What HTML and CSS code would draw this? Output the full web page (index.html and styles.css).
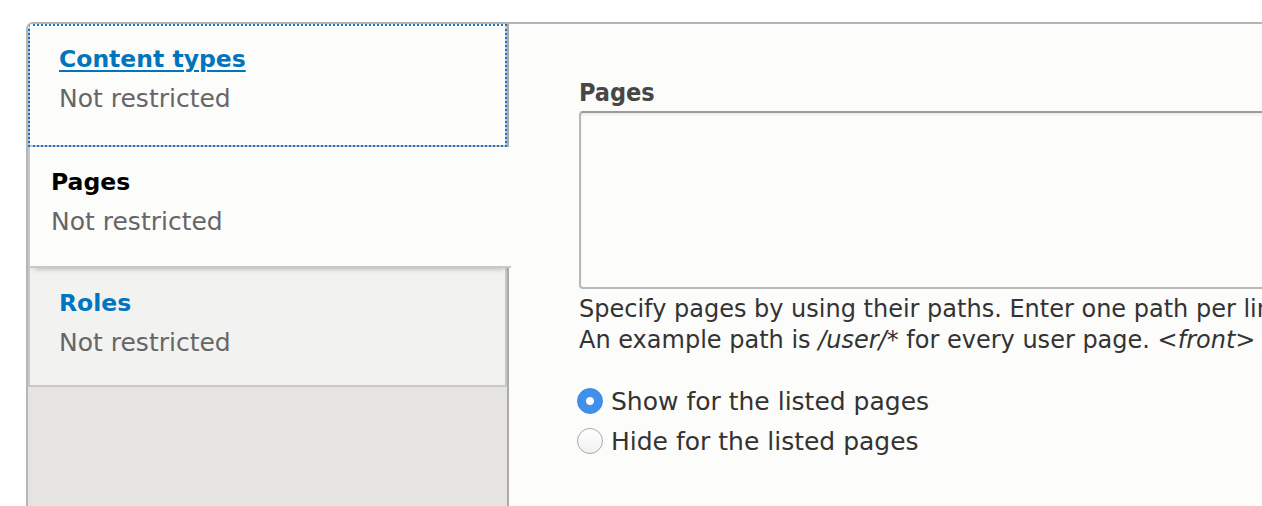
FILE: index.html
```html
<!DOCTYPE html>
<html lang="en">
<head>
<meta charset="utf-8">
<title>Visibility</title>
<link rel="stylesheet" href="styles.css">
</head>
<body>
<div class="vtabs">
  <ul class="vtabs-menu">
    <li class="tab is-focused">
      <a class="tab-link" href="#"><strong class="tab-title">Content types</strong><span class="tab-summary">Not restricted</span></a>
    </li>
    <li class="tab is-selected">
      <a class="tab-link" href="#"><strong class="tab-title">Pages</strong><span class="tab-summary">Not restricted</span></a>
    </li>
    <li class="tab is-last">
      <a class="tab-link" href="#"><strong class="tab-title">Roles</strong><span class="tab-summary">Not restricted</span></a>
    </li>
  </ul>
  <div class="vtabs-pane">
    <label class="field-label" for="pages">Pages</label>
    <textarea class="field-textarea" id="pages"></textarea>
    <div class="description">Specify pages by using their paths. Enter one path per line. The '*' character is a wildcard.<br>An example path is <em>/user/*</em> for every user page. <em>&lt;front&gt;</em> is the front page.</div>
    <div class="radios">
      <label class="radio-item"><input class="radio" type="radio" name="vis" checked><span>Show for the listed pages</span></label>
      <label class="radio-item"><input class="radio" type="radio" name="vis"><span>Hide for the listed pages</span></label>
    </div>
  </div>
</div>
</body>
</html>
```
FILE: styles.css
```css
html, body {
  margin: 0;
  height: 100%;
  overflow: hidden;
  background: #ffffff;
}
body {
  font-family: "DejaVu Sans", sans-serif;
}
.vtabs {
  display: flex;
  margin: 22px 0 0 26px;
  width: 1400px;
  min-height: 600px;
  box-sizing: border-box;
  border: 2px solid #b6b6b6;
  border-right: 0;
  border-bottom: 0;
  border-radius: 7px 0 0 0;
  background: #fcfcfa;
  overflow: hidden;
}
.vtabs-menu {
  flex: 0 0 481px;
  box-sizing: border-box;
  margin: 0;
  padding: 0;
  list-style: none;
  background: #e5e4e0;
  border-right: 2px solid #aaaaaa;
}
.tab {
  border-style: solid;
  border-color: #c8c8c8;
  border-width: 0 2px 2px 2px;
  background: #f2f2f0;
}
.tab.is-focused {
  background: #fcfcfa;
  outline: 2px dotted #1a73c4;
  outline-offset: -2px;
}
.tab.is-selected {
  position: relative;
  z-index: 1;
  background: #fcfcfa;
  border-right-width: 0;
  margin-right: -4px;
  box-shadow: 0 6px 6px -6px rgba(0, 0, 0, 0.35);
}
.tab-link {
  display: block;
  padding: 15px 30px 24px 29px;
  text-decoration: none;
}
.tab.is-focused .tab-link {
  padding-bottom: 26px;
}
.tab.is-last .tab-link {
  padding-bottom: 22px;
}
.tab.is-selected .tab-link {
  padding-left: 21px;
}
.tab-title {
  display: block;
  font-size: 23.5px;
  line-height: 40px;
  font-weight: bold;
  color: #0074bd;
}
.tab.is-focused .tab-title {
  text-decoration: underline;
  text-decoration-thickness: 2px;
  text-underline-offset: 3px;
}
.tab.is-selected .tab-title {
  color: #000000;
}
.tab-summary {
  display: block;
  font-size: 25px;
  line-height: 40px;
  color: #666666;
}
.vtabs-pane {
  flex: 1;
  padding: 54px 0 0 70px;
  color: #333333;
}
.field-label {
  display: block;
  font-family: "DejaVu Sans Condensed", "DejaVu Sans", sans-serif;
  font-stretch: condensed;
  font-weight: bold;
  font-size: 25px;
  line-height: 30px;
  color: #474747;
}
.field-textarea {
  display: block;
  box-sizing: border-box;
  width: 1000px;
  height: 178px;
  margin: 3px 0 0;
  border: 2px solid #b8b8b8;
  border-top-color: #9c9c9c;
  border-radius: 4px;
  background: #fcfcfa;
  box-shadow: inset 0 2px 3px rgba(0, 0, 0, 0.07);
  resize: none;
}
.description {
  margin-top: 5px;
  font-size: 24px;
  line-height: 31px;
  white-space: nowrap;
  color: #333333;
}
.radios {
  margin-top: 25px;
}
.radio-item {
  display: flex;
  align-items: center;
  gap: 8px;
  height: 40px;
  font-size: 25px;
  color: #333333;
}
.radio {
  appearance: none;
  -webkit-appearance: none;
  box-sizing: border-box;
  width: 26px;
  height: 26px;
  margin: 0 0 0 -2px;
  border-radius: 50%;
  border: 1px solid #a9a9a9;
  background: linear-gradient(#ffffff, #f1f1f1);
}
.radio:checked {
  border-color: #3a88dd;
  background: radial-gradient(circle, #ffffff 0 3.5px, #3f90ea 4.5px);
}
```
